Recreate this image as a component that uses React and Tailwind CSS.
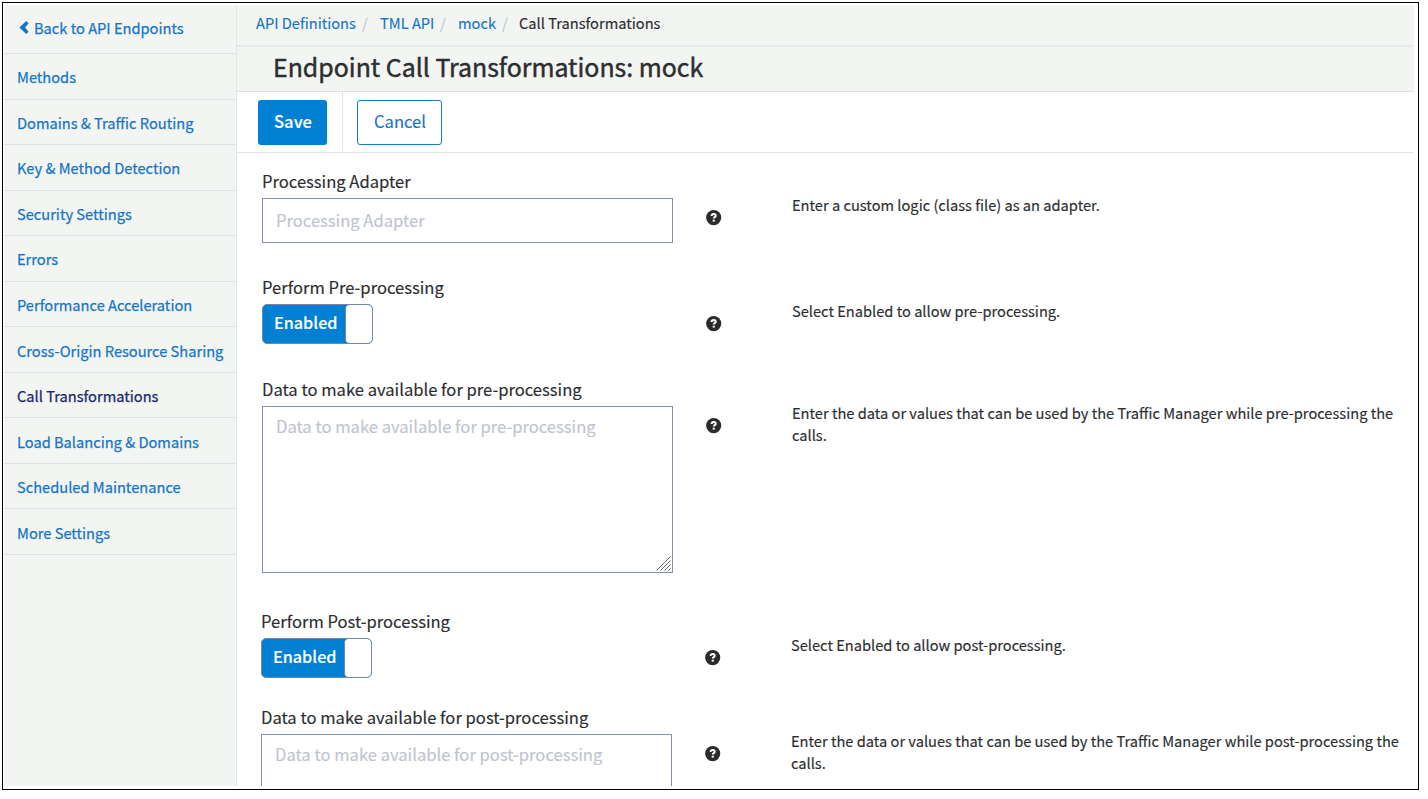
import React from "react";

const NAV = [
  "Methods",
  "Domains & Traffic Routing",
  "Key & Method Detection",
  "Security Settings",
  "Errors",
  "Performance Acceleration",
  "Cross-Origin Resource Sharing",
  "Call Transformations",
  "Load Balancing & Domains",
  "Scheduled Maintenance",
  "More Settings",
];

function ChevronLeft() {
  return (
    <svg className="mr-[5px] h-[13px] w-[10px] shrink-0" viewBox="0 0 10 13">
      <path d="M7.2 0 L9.6 2.3 L6.2 6.5 L9.6 10.7 L7.2 13 L0.4 6.5 Z" fill="currentColor" />
    </svg>
  );
}

function Help() {
  return (
    <svg className="size-4 shrink-0" viewBox="0 0 16 16">
      <circle cx="7.7" cy="7.6" r="7.6" fill="#2b2b2b" />
      <path
        d="M5.6 6 C5.7 4.6 6.6 4.1 7.7 4.1 C8.9 4.1 9.7 4.8 9.7 5.7 C9.7 7.1 7.8 7.1 7.8 8.5"
        fill="none"
        stroke="#fff"
        strokeWidth="2"
      />
      <rect x="6.7" y="9.7" width="2.1" height="1.9" fill="#fff" />
    </svg>
  );
}

function Grip() {
  return (
    <svg className="size-[15px]" viewBox="0 0 15 15">
      <path d="M0.5 14.5 L14.5 0.5 M4.5 14.5 L14.5 4.5 M8.5 14.5 L14.5 8.5 M12.5 14.5 L14.5 12.5" stroke="#666" fill="none" />
    </svg>
  );
}

function Toggle() {
  return (
    <div className="flex h-10 w-[111px] overflow-hidden rounded-[5px] border border-[#7587a3] bg-[#0080d3]">
      <div className="w-[82px] pl-[11px] text-[16.2px] leading-[35px] font-medium text-white">Enabled</div>
      <div className="flex-1 rounded-[4px] border-l border-[#7587a3] bg-white" />
    </div>
  );
}

function Row({ label, help, className, children }) {
  return (
    <div className={"flex items-start " + className}>
      <div className="w-[411px] shrink-0">
        <div className="h-[28px] text-[16.6px] leading-[22px] whitespace-nowrap">{label}</div>
        {children}
      </div>
      <div className="mt-[40px] ml-[33px] shrink-0">
        <Help />
      </div>
      <p className="mt-[24px] ml-[70px] w-[616px] text-[14.65px] leading-[22px]">{help}</p>
    </div>
  );
}

export default function App() {
  return (
    <div className="h-[799px] w-[1428px] overflow-hidden bg-white p-[2px] font-['Noto_Sans_CJK_SC',sans-serif] text-[#2d2e30] [-webkit-text-stroke:0.15px]">
      <div className="h-[788px] w-[1417px] border border-black pt-[2px] pr-[4px] pb-[3px] pl-px">
        <div className="flex h-[781px] overflow-hidden">
          <nav className="w-[233px] shrink-0 border-r border-[#e3e6e6] bg-[#f3f5f3] text-[14.65px] text-[#1675c4] [-webkit-text-stroke:0.25px]">
            <a className="flex h-[49px] items-center border-b border-[#dfe2e2] pb-[3px] pl-[15px] whitespace-nowrap">
              <ChevronLeft />
              Back to API Endpoints
            </a>
            {NAV.map((item) => (
              <a
                key={item}
                className={
                  "flex h-[45.55px] items-center border-b border-[#dfe2e2] pt-[2px] pl-[13px] whitespace-nowrap " +
                  (item === "Call Transformations" ? "text-[#17286e]" : "")
                }
              >
                {item}
              </a>
            ))}
          </nav>

          <main className="min-w-0 flex-1">
            <div className="flex h-[42px] items-center border-b-2 border-[#e8eae9] bg-[#f3f5f3] pb-[5px] pl-[19px] text-[14.65px] whitespace-nowrap text-[#1675c4]">
              <span className="w-[100px]">API Definitions</span>
              <span className="w-[24px] pl-[6px] text-[#c3c6c8]">/</span>
              <span className="w-[54px]">TML API</span>
              <span className="w-[24px] pl-[6px] text-[#c3c6c8]">/</span>
              <span className="w-[38px]">mock</span>
              <span className="w-[23px] pl-[6px] text-[#c3c6c8]">/</span>
              <span className="text-[#2d2e30]">Call Transformations</span>
            </div>
            <h1 className="h-[45px] border-b border-[#dfe1e2] bg-[#f3f5f3] pl-[36px] text-[24.9px] leading-[39px] [-webkit-text-stroke:0.45px]">
              Endpoint Call Transformations: mock
            </h1>
            <div className="flex h-[61px] border-b border-[#e1e3e6] pl-[21px]">
              <div className="w-[85px] border-r border-[#e1e3e6] pt-[8px]">
                <button className="h-[45px] w-[69px] rounded-[3px] bg-[#0080d3] pb-[3px] pl-px text-[16.6px] font-medium text-white">Save</button>
              </div>
              <button className="mt-[8px] ml-[14px] h-[45px] w-[85px] rounded-[3px] border border-[#1a7cc2] pb-[3px] pl-px text-[16.6px] text-[#1675c4]">
                Cancel
              </button>
            </div>

            <div className="pt-[17px] pl-[25px]">
              <Row label="Processing Adapter" help="Enter a custom logic (class file) as an adapter." className="h-[106px]">
                <div className="h-[45px] border border-[#8391ab] pl-[13px] text-[16.6px] leading-[43px] text-[#bfc5cf]">Processing Adapter</div>
              </Row>
              <Row label="Perform Pre-processing" help="Select Enabled to allow pre-processing." className="h-[102px]">
                <Toggle />
              </Row>
              <Row
                label="Data to make available for pre-processing"
                help="Enter the data or values that can be used by the Traffic Manager while pre-processing the calls."
                className="h-[232px]"
              >
                <div className="flex h-[167px] items-end justify-between border border-[#8391ab] pr-px pb-px pl-[13px] text-[16.6px] text-[#bfc5cf]">
                  <span className="self-start leading-[39px]">Data to make available for pre-processing</span>
                  <Grip />
                </div>
              </Row>
              <div className="-ml-px">
                <Row label="Perform Post-processing" help="Select Enabled to allow post-processing." className="h-[96px]">
                  <Toggle />
                </Row>
                <Row
                  label="Data to make available for post-processing"
                  help="Enter the data or values that can be used by the Traffic Manager while post-processing the calls."
                  className="h-[80px]"
                >
                  <div className="h-[53px] border border-b-0 border-[#8391ab] pl-[13px] text-[16.6px] leading-[39px] text-[#bfc5cf]">
                    Data to make available for post-processing
                  </div>
                </Row>
              </div>
            </div>
          </main>
        </div>
      </div>
    </div>
  );
}
